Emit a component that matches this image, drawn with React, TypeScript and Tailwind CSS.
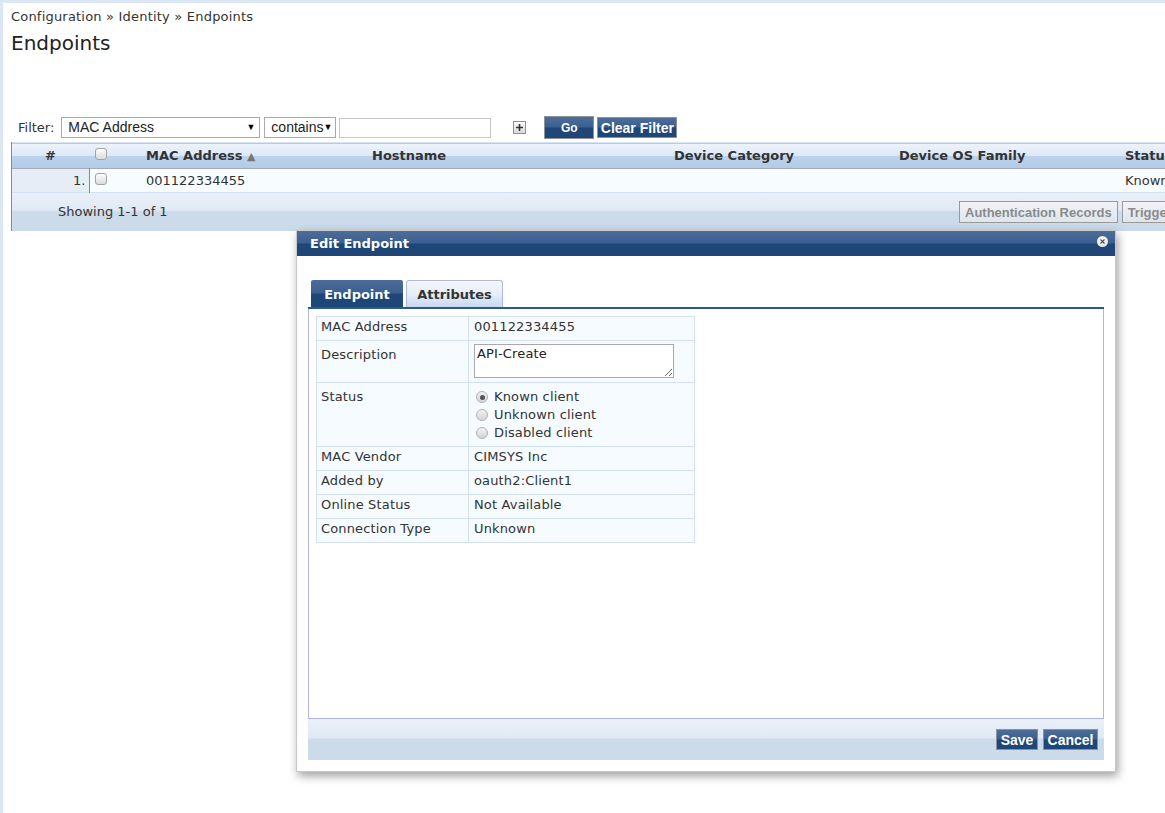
import { useState } from "react";

// ============================================
// PANTALLA DE ENDPOINTS + DIÁLOGO DE EDICIÓN
// ============================================

const verdana = "font-['DejaVu_Sans','Noto_Sans',sans-serif]";
const arial = "font-['Liberation_Sans',Arial,sans-serif]";

const glossHeader =
  "bg-[linear-gradient(to_bottom,#edf3fb_0%,#dde8f6_48%,#bcd2ec_52%,#b3cbe8_100%)]";
const glossFooter =
  "bg-[linear-gradient(to_bottom,#eaf0f9_0%,#e0e9f5_45%,#cbdbea_50%,#cbdbea_100%)]";
const glossDark =
  "bg-[linear-gradient(to_bottom,#4d6d99_0%,#3c5f8f_48%,#1e4677_52%,#1e4677_100%)]";

const BlueButton = ({ label, className = "" }: { label: string; className?: string }) => (
  <button
    className={`${arial} ${glossDark} border border-[#8c929b] text-white font-bold leading-none whitespace-nowrap ${className}`}
  >
    {label}
  </button>
);

const GreyButton = ({ label, className = "" }: { label: string; className?: string }) => (
  <button
    className={`${arial} shrink-0 whitespace-nowrap h-[22px] px-[5px] border border-[#9a9a9a] bg-[linear-gradient(to_bottom,#f1f4f8,#dde5ee)] text-[#8a8a8a] font-bold text-[13px] leading-none ${className}`}
  >
    {label}
  </button>
);

const Checkbox = () => (
  <span className="inline-block w-[12px] h-[12px] rounded-[3px] border border-[#a3a3a3] bg-[linear-gradient(to_bottom,#fdfdfd,#dcdcdc)]" />
);

const Radio = ({ checked }: { checked?: boolean }) => (
  <span className="relative inline-flex items-center justify-center w-[12px] h-[12px] rounded-full border border-[#b3b3b3] bg-[linear-gradient(to_bottom,#f2f2f2,#d4d4d4)]">
    {checked && <span className="w-[5px] h-[5px] rounded-full bg-[#555]" />}
  </span>
);

const FakeSelect = ({ label, width }: { label: string; width: string }) => (
  <div
    className={`${arial} ${width} h-[21px] flex items-center justify-between border border-[#a9a9a9] bg-white pl-[6px] pr-[4px] text-[14px] text-[#222]`}
  >
    <span>{label}</span>
    <span className="text-[9px] text-black">▼</span>
  </div>
);

const App = () => {
  const [status, setStatus] = useState("known");

  const rows: [string, string][] = [
    ["MAC Vendor", "CIMSYS Inc"],
    ["Added by", "oauth2:Client1"],
    ["Online Status", "Not Available"],
    ["Connection Type", "Unknown"],
  ];

  const cell = "border border-[#d3e0f1] bg-[#f6fbff] align-top";

  return (
    <div
      className={`${verdana} relative w-[1165px] h-[813px] overflow-hidden bg-white border-t-[3px] border-l-[3px] border-[#dce7f5] text-[#333]`}
    >
      {/* Breadcrumb */}
      <div className="pl-[8px] pt-[6px] text-[13px] leading-[16px] tracking-[0.2px]">
        Configuration » Identity » Endpoints
      </div>
      <h1 className="pl-[8px] mt-[6px] text-[20px] leading-[24px] text-[#222]">Endpoints</h1>

      {/* Filtro */}
      <div className="flex items-center mt-[61px] pl-[15px] h-[23px] text-[13px]">
        <span className="mr-[7px]">Filter:</span>
        <FakeSelect label="MAC Address" width="w-[199px]" />
        <div className="w-[4px]" />
        <FakeSelect label="contains" width="w-[72px]" />
        <div className="w-[3px]" />
        <input className="w-[152px] h-[20px] border border-[#c6c6c6] bg-white" />
        <div className="w-[22px]" />
        <span className="w-[13px] h-[13px] flex items-center justify-center border border-[#8f8f8f] bg-[linear-gradient(to_bottom,#fafafa,#dadada)]">
          <svg width="9" height="9" viewBox="0 0 9 9">
            <path d="M4.5 1v7M1 4.5h7" stroke="#333" strokeWidth="1.6" />
          </svg>
        </span>
        <div className="w-[18px]" />
        <BlueButton label="Go" className="w-[50px] h-[23px] text-[12px]" />
        <div className="w-[3px]" />
        <BlueButton label="Clear Filter" className="w-[80px] h-[21px] text-[14px]" />
      </div>

      {/* Tabla de endpoints */}
      <div className="ml-[8px] mt-[3px] w-[1300px] border-l border-[#8a8a8a]">
        <table className="w-full border-collapse text-[13px]">
          <colgroup>
            <col className="w-[77px]" />
            <col className="w-[51px]" />
            <col className="w-[226px]" />
            <col className="w-[302px]" />
            <col className="w-[225px]" />
            <col className="w-[226px]" />
            <col />
          </colgroup>
          <thead>
            <tr className={`${glossHeader} h-[26px] border-t border-[#d9e4f2] border-b border-b-[#a3abb8]`}>
              <th className="text-center font-bold">#</th>
              <th className="text-left pl-[6px]">
                <Checkbox />
              </th>
              <th className="text-left pl-[6px] font-bold">
                MAC Address <span className="text-[#777] text-[11px]">▲</span>
              </th>
              <th className="text-left pl-[6px] font-bold">Hostname</th>
              <th className="text-left pl-[6px] font-bold">Device Category</th>
              <th className="text-left pl-[6px] font-bold">Device OS Family</th>
              <th className="text-left pl-[6px] font-bold whitespace-nowrap">Status</th>
            </tr>
          </thead>
          <tbody>
            <tr className="h-[24px] bg-[#f6fcff] border-b border-[#d3e0f1]">
              <td className="text-right pr-[3px] bg-[#e6edf7] border-r border-[#8a8a8a]">1.</td>
              <td className="pl-[5px]">
                <Checkbox />
              </td>
              <td className="pl-[6px]">001122334455</td>
              <td />
              <td />
              <td />
              <td className="pl-[6px] whitespace-nowrap">Known client</td>
            </tr>
          </tbody>
        </table>
        <div className={`${glossFooter} h-[38px] flex items-center text-[13px]`}>
          <div className="w-[947px] shrink-0 pl-[46px]">Showing 1-1 of 1</div>
          <GreyButton label="Authentication Records" />
          <GreyButton label="Trigger Server Action" className="ml-[4px]" />
        </div>
      </div>

      {/* Diálogo Edit Endpoint */}
      <div className="absolute left-[293px] top-[227px] w-[820px] bg-white border border-[#c9c9c9] shadow-[2px_4px_9px_rgba(0,0,0,0.38)]">
        <div className={`${glossDark} h-[25px] flex items-center justify-between px-[13px]`}>
          <span className="text-white font-bold text-[13px]">Edit Endpoint</span>
          <span className="w-[11px] h-[11px] rounded-full bg-[radial-gradient(circle_at_40%_35%,#ffffff,#d8d8d8)] flex items-center justify-center -mt-[5px] mr-[-6px]">
            <svg width="7" height="7" viewBox="0 0 7 7">
              <path d="M1.5 1.5l4 4M5.5 1.5l-4 4" stroke="#555" strokeWidth="1.3" />
            </svg>
          </span>
        </div>

        <div className="px-[11px] pt-[24px] pb-[11px]">
          {/* Pestañas */}
          <div className="flex items-end pl-[3px] gap-[3px]">
            <div
              className={`${glossDark} w-[92px] h-[27px] flex items-center justify-center text-white font-bold text-[13px] rounded-t-[2px] pt-[2px]`}
            >
              Endpoint
            </div>
            <div className="w-[97px] h-[27px] flex items-center justify-center font-bold text-[13px] text-[#333] border border-b-0 border-[#b0b8e0] rounded-t-[3px] pt-[2px] bg-[linear-gradient(to_bottom,#f4f7fc_0%,#e6eef9_50%,#c6d9f0_100%)]">
              Attributes
            </div>
          </div>
          <div className="h-[2px] bg-[#2b5891]" />

          <div className="h-[410px] border border-t-0 border-[#b0b4e0] pl-[7px] pt-[7px]">
            <table className="border-collapse text-[13px] tracking-[0.15px]">
              <colgroup>
                <col className="w-[152px]" />
                <col className="w-[226px]" />
              </colgroup>
              <tbody>
                <tr className="h-[24px]">
                  <td className={`${cell} pl-[4px] align-middle`}>MAC Address</td>
                  <td className={`${cell} pl-[5px] align-middle`}>001122334455</td>
                </tr>
                <tr className="h-[42px]">
                  <td className={`${cell} pl-[4px] pt-[4px]`}>Description</td>
                  <td className={`${cell} pl-[5px] pt-[3px]`}>
                    <textarea
                      readOnly
                      defaultValue="API-Create"
                      className={`${verdana} block w-[200px] h-[34px] border border-[#a9a9a9] bg-white text-[13px] leading-[16px] px-[2px] pt-[1px] text-[#222]`}
                    />
                  </td>
                </tr>
                <tr className="h-[64px]">
                  <td className={`${cell} pl-[4px] pt-[4px]`}>Status</td>
                  <td className={`${cell} pl-[7px] pt-[5px]`}>
                    {[
                      ["known", "Known client"],
                      ["unknown", "Unknown client"],
                      ["disabled", "Disabled client"],
                    ].map(([key, label]) => (
                      <div
                        key={key}
                        className="flex items-center gap-[6px] h-[18px] cursor-pointer"
                        onClick={() => setStatus(key)}
                      >
                        <Radio checked={status === key} />
                        <span>{label}</span>
                      </div>
                    ))}
                  </td>
                </tr>
                {rows.map(([k, v]) => (
                  <tr key={k} className="h-[24px]">
                    <td className={`${cell} pl-[4px] align-middle`}>{k}</td>
                    <td className={`${cell} pl-[5px] align-middle`}>{v}</td>
                  </tr>
                ))}
              </tbody>
            </table>
          </div>

          {/* Botones */}
          <div className={`${glossFooter} h-[41px] flex items-center justify-end gap-[5px] pr-[6px]`}>
            <BlueButton label="Save" className="w-[42px] h-[21px] text-[14px]" />
            <BlueButton label="Cancel" className="w-[55px] h-[21px] text-[14px]" />
          </div>
        </div>
      </div>
    </div>
  );
};

export default App;
